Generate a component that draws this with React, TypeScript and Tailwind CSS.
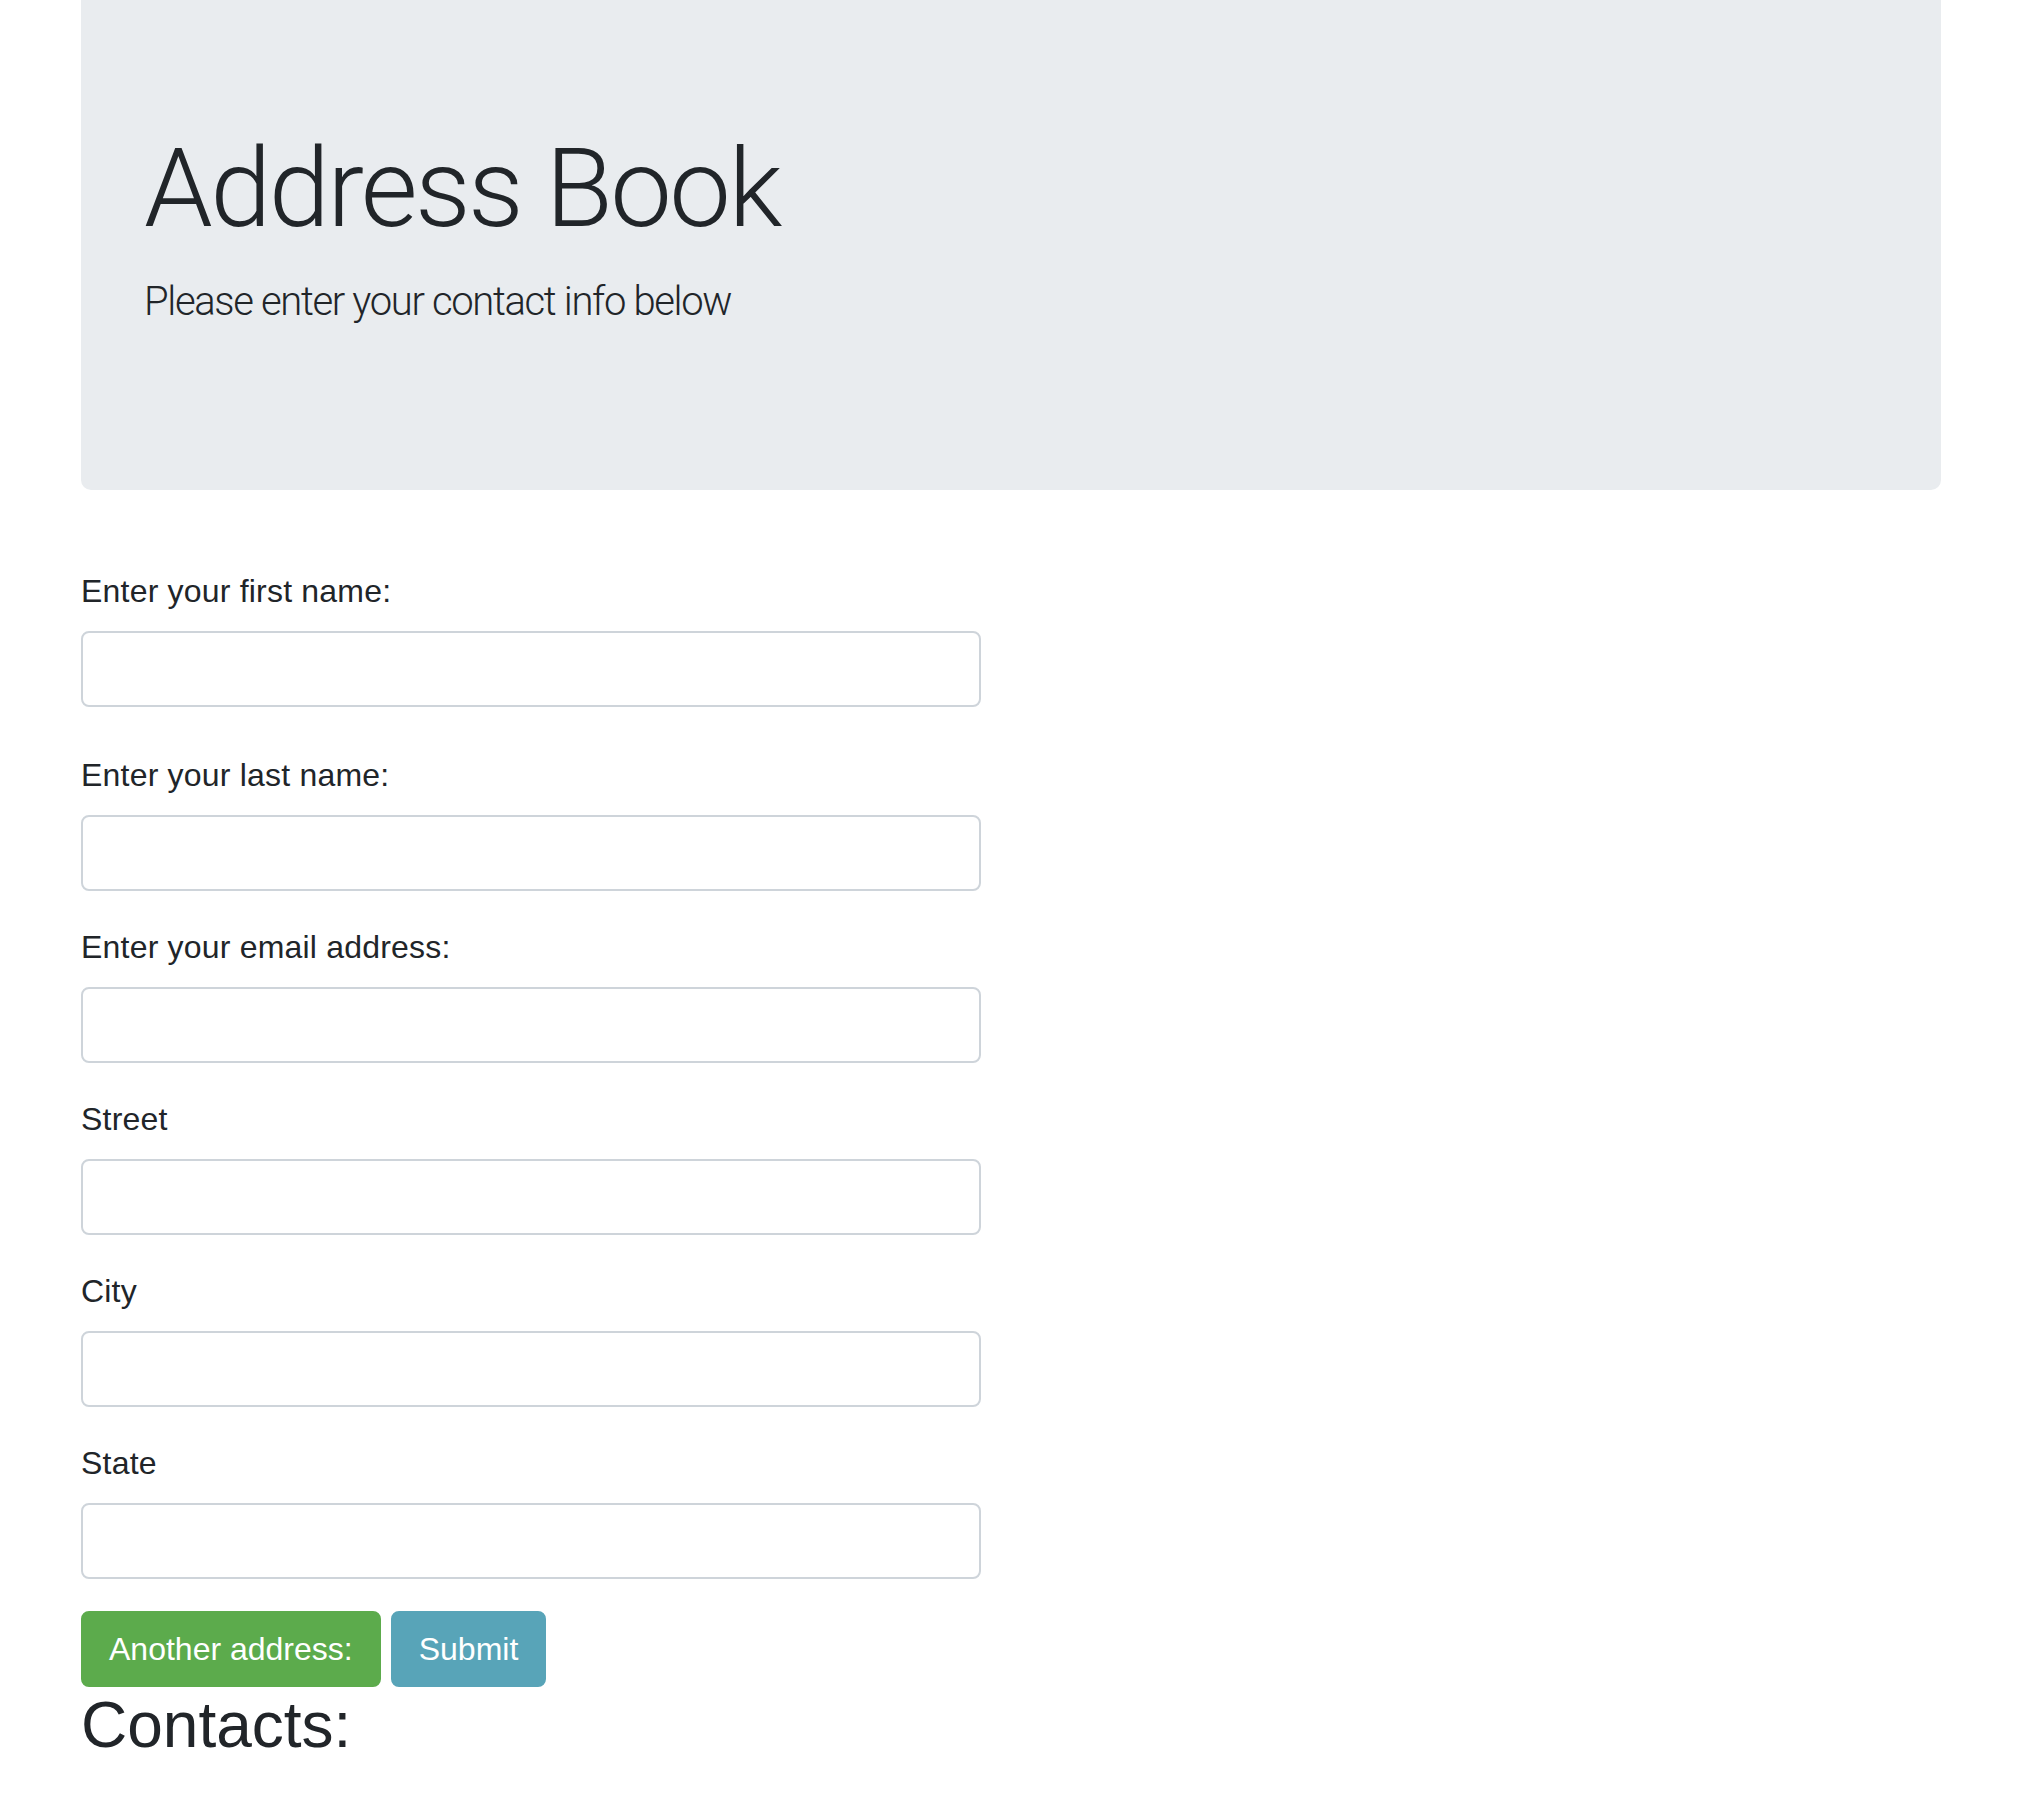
const FIELDS = [
  "Enter your first name:",
  "Enter your last name:",
  "Enter your email address:",
  "Street",
  "City",
  "State",
];

export default function App() {
  return (
    <div className="min-h-screen bg-white text-[#212529] font-['Liberation_Sans',Arial,sans-serif]">
      <div className="ml-[81px] w-[1860px]">
        {/* Jumbotron */}
        <div className="h-[490px] rounded-b-[10px] bg-[#e9ecef] px-[63px] pt-[123px]">
          <h1 className="font-['Roboto',sans-serif] text-[110px] font-light leading-[1.2] tracking-[-2.6px]">
            Address Book
          </h1>
          <p className="mt-[17px] font-['Roboto',sans-serif] text-[40px] font-light leading-[1.5] tracking-[-1.35px]">
            Please enter your contact info below
          </p>
        </div>

        <form className="mt-[77px] w-[900px]" onSubmit={(e) => e.preventDefault()}>
          {FIELDS.map((label, i) => (
            <div key={label} className={i === 0 ? "mb-[44px]" : "mb-[32px]"}>
              <label className="mb-[16px] block text-[32px] leading-[48px] tracking-[0.2px]">
                {label}
              </label>
              <input
                type="text"
                className="block h-[76px] w-full rounded-[8px] border-2 border-[#ced4da] bg-white px-[24px] text-[32px] outline-none"
              />
            </div>
          ))}

          <div className="flex gap-[10px]">
            <button
              type="button"
              className="rounded-[8px] border-2 border-[#5cab4c] bg-[#5cab4c] px-[26px] py-[12px] text-[32px] leading-[48px] text-white"
            >
              Another address:
            </button>
            <button
              type="submit"
              className="rounded-[8px] border-2 border-[#58a4b8] bg-[#58a4b8] px-[26px] py-[12px] text-[32px] leading-[48px] text-white"
            >
              Submit
            </button>
          </div>
        </form>

        <h2 className="text-[64px] font-medium leading-[1.2]">Contacts:</h2>
      </div>
    </div>
  );
}
